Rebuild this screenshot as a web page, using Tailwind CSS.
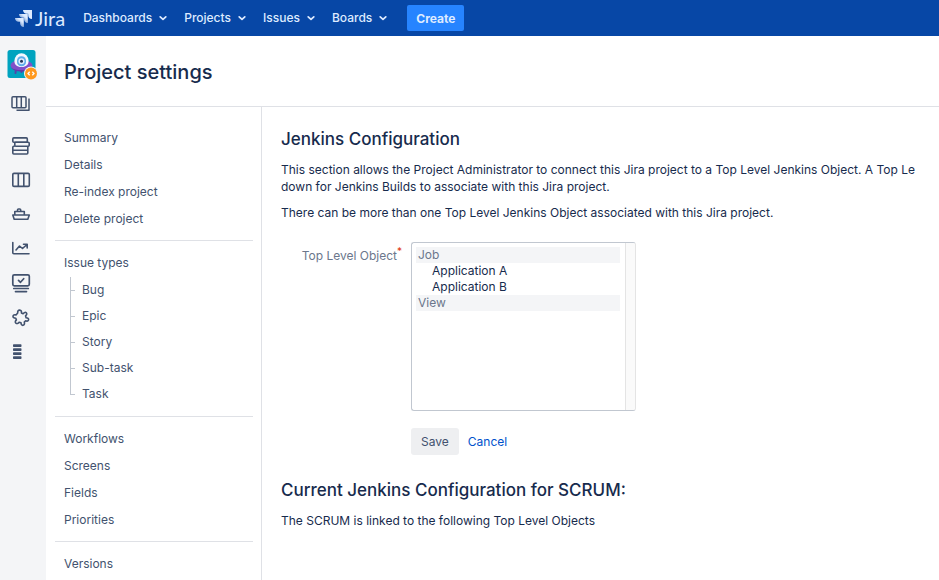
<!DOCTYPE html>
<html lang="en">
<head>
<meta charset="utf-8">
<meta name="viewport" content="width=device-width, initial-scale=1">
<title>Project settings - Jira</title>
<script src="https://cdn.jsdelivr.net/npm/@tailwindcss/browser@4"></script>
</head>
<body class="flex h-screen flex-col overflow-hidden bg-white font-['Inter','Liberation_Sans',sans-serif] text-[12px] leading-[17px] text-[#172b4d]">
  <header class="flex h-9 shrink-0 items-center bg-[#0747a6] pl-[15px] text-[#deebff]">
    <a href="#" aria-label="Jira" class="flex items-center gap-[2px]">
      <svg class="h-[18px] w-[18px]" viewBox="0 0 18 18" aria-hidden="true">
        <defs>
          <linearGradient id="fade" x1="1" y1="0" x2="0.2" y2="0.9"><stop offset="0.35" stop-color="#deebff"/><stop offset="1" stop-color="#deebff" stop-opacity="0.3"/></linearGradient>
        </defs>
        <path fill="#deebff" d="M8 1h9v9c-2.200 0-3.800-1.700-3.800-3.800V4.800h-1.400C9.700 4.800 8 3.200 8 1z"/>
        <path fill="url(#fade)" d="M4 5h8.800v9c-2.200 0-3.700-1.700-3.700-3.800V8.800H7.700C5.600 8.800 4 7.200 4 5z"/>
        <path fill="url(#fade)" d="M0 9h8.800v9c-2.200 0-3.700-1.700-3.700-3.800v-1.400H3.700C1.600 12.800 0 11.200 0 9z"/>
      </svg>
      <span class="font-['Lato','Inter',sans-serif] text-[20px] leading-6">Jira</span>
    </a>
    <nav class="ml-[18px] flex items-center gap-[17px] pb-px font-medium">
      <button type="button" class="flex items-center gap-[7px]">Dashboards<svg class="h-2 w-2" viewBox="0 0 8 8" fill="none" stroke="currentColor" stroke-width="1.700" stroke-linecap="round" stroke-linejoin="round"><path d="M1.200 2.800 4 5.400l2.800-2.600"/></svg></button>
      <button type="button" class="flex items-center gap-[7px]">Projects<svg class="h-2 w-2" viewBox="0 0 8 8" fill="none" stroke="currentColor" stroke-width="1.700" stroke-linecap="round" stroke-linejoin="round"><path d="M1.200 2.800 4 5.400l2.800-2.600"/></svg></button>
      <button type="button" class="flex items-center gap-[7px]">Issues<svg class="h-2 w-2" viewBox="0 0 8 8" fill="none" stroke="currentColor" stroke-width="1.700" stroke-linecap="round" stroke-linejoin="round"><path d="M1.200 2.800 4 5.400l2.800-2.600"/></svg></button>
      <button type="button" class="flex items-center gap-[7px]">Boards<svg class="h-2 w-2" viewBox="0 0 8 8" fill="none" stroke="currentColor" stroke-width="1.700" stroke-linecap="round" stroke-linejoin="round"><path d="M1.200 2.800 4 5.400l2.800-2.600"/></svg></button>
    </nav>
    <button type="button" class="ml-5 h-[26px] rounded-[2px] bg-[#2684ff] px-[9px] text-[12px] font-bold">Create</button>
  </header>

  <div class="flex min-h-0 flex-1">
    <nav aria-label="Project" class="flex w-[46px] shrink-0 flex-col bg-[#f4f5f7] pt-[14px] text-[#42526e]">
      <a href="#" aria-label="Project" class="ml-[7px] block">
        <svg class="h-8 w-8" viewBox="0 0 32 32">
          <rect x="0.500" width="28" height="28" rx="2.500" fill="#00a3bf"/>
          <path d="M9 18.500 8.500 23M20 18.500l.5 4M14.500 20v2" stroke="#5243aa" stroke-width="2" stroke-linecap="round"/>
          <ellipse cx="14.500" cy="15.500" rx="11" ry="5.600" fill="#8050c8"/>
          <path d="M4 17.500c3 5 17 6 21 0-2 2-6 2.500-10.500 2.500S6 19.500 4 17.500z" fill="#5e3aa8"/>
          <path d="M7.400 11a7.100 7.800 0 0 1 14.200 0c0 3.500-2.300 6-7.100 6s-7.100-2.500-7.100-6z" fill="#f4f8ff"/>
          <rect x="10" y="6.300" width="9" height="10" rx="4.300" fill="#5faeea"/>
          <circle cx="14.500" cy="11.200" r="3" fill="#deebff"/>
          <circle cx="14.500" cy="11.200" r="1.500" fill="#253858"/>
          <circle cx="24" cy="23.500" r="7" fill="#f4f5f7"/>
          <circle cx="24" cy="23.500" r="6" fill="#ff991f"/>
          <path d="m22.700 21.700-1.700 1.800 1.700 1.800M25.300 21.700l1.700 1.800-1.700 1.800" fill="none" stroke="#fff" stroke-width="1.300"/>
        </svg>
      </a>
      <div class="ml-[11px] mt-[13px] flex flex-col items-start gap-4">
        <a href="#" aria-label="Boards" class="mb-2"><svg class="h-[18px] w-5" viewBox="0 0 20 18" fill="none" stroke="currentColor" stroke-width="1.500" stroke-linejoin="round"><rect x="1" y="1.700" width="14" height="11" rx="1"/><path d="M5.700 1.700v11M10.300 1.700v11M18 3.500v11.700H5.500"/></svg></a>
        <a href="#" aria-label="Backlog"><svg class="h-[18px] w-5" viewBox="0 0 20 18" fill="none" stroke="currentColor" stroke-width="1.600" stroke-linejoin="round"><rect x="1.800" y="0.900" width="14.500" height="4.300" rx="1"/><rect x="3.800" y="5.200" width="14.400" height="4.100" rx="1"/><path d="M3.800 9.300H2.800q-1 0-1 1v5.700q0 1 1 1h13q1 0 1-1V9.300M1.800 13.200h15"/></svg></a>
        <a href="#" aria-label="Active sprints"><svg class="h-[18px] w-5" viewBox="0 0 20 18" fill="none" stroke="currentColor" stroke-width="1.600"><rect x="1.800" y="2.400" width="16.500" height="13" rx="1.200"/><path d="M7.300 2.400v13M12.800 2.400v13"/></svg></a>
        <a href="#" aria-label="Releases"><svg class="h-[18px] w-5" viewBox="0 0 20 18" fill="none" stroke="currentColor" stroke-width="1.600" stroke-linejoin="round"><path d="M1.800 10h16.500l-1.500 4.200H3.200zM3.800 10V6.500h9.500V10M6.500 6.500V5q0-1 1-1h1.200q1 0 1 1v1.500"/></svg></a>
        <a href="#" aria-label="Reports"><svg class="h-[18px] w-5" viewBox="0 0 20 18" fill="none" stroke="currentColor" stroke-width="1.600" stroke-linecap="round" stroke-linejoin="round"><path d="M1.800 3.500v10.200q0 1 1 1H18M5 11l3.500-4 3 2.500L16 5.500M12.500 5.300h3.700V9"/></svg></a>
        <a href="#" aria-label="Issues"><svg class="h-5 w-5" viewBox="0 0 20 20" fill="none" stroke="currentColor" stroke-width="1.700" stroke-linecap="round" stroke-linejoin="round"><rect x="1.800" y="1.800" width="16.500" height="11" rx="1.500"/><path d="m7.500 7.300 2 2 3.200-3.600M2.800 15.500h14.500M4.500 18.600h11"/></svg></a>
        <a href="#" aria-label="Add-ons"><svg class="h-[18px] w-5" viewBox="0 0 20 18" fill="none" stroke="currentColor" stroke-width="1.600" stroke-linejoin="round"><path d="M6.700 3.900C6.500 2 7.300 1 8.700 1.100c1.500.100 2 1.300 1.700 2.900l1.700.7C13.400 3.300 14.500 3 15.300 3.800c.9.900.5 2-.8 3l.6 1.900c1.800.100 2.700.8 2.500 2-.2 1.300-1.400 1.700-3 1.100l-1.300 1.300c.5 1.900 0 2.900-1.200 3.200-1.300.2-2-.7-2.100-2.500l-1.900-.6c-1 1.400-2.200 1.700-3.200.9-1-.9-.7-2 .5-3.200L4.800 9.200C2.900 9.200 1.900 8.500 2 7.200c.200-1.300 1.300-1.700 3-1.300z"/></svg></a>
        <a href="#" aria-label="More"><svg class="h-[18px] w-5" viewBox="0 0 20 18" fill="currentColor"><rect x="2" y="1.200" width="8.500" height="2.800" rx=".7"/><rect x="2" y="5.200" width="8.500" height="2.800" rx=".7"/><rect x="2" y="9.200" width="8.500" height="2.800" rx=".7"/><rect x="2" y="13.200" width="8.500" height="2.800" rx=".7"/></svg></a>
      </div>
    </nav>

    <div class="flex min-w-0 flex-1 flex-col">
      <div class="border-b border-[#dfe1e6] px-[18px] pb-5 pt-[22px]">
        <h1 class="text-[20px] font-medium leading-7">Project settings</h1>
      </div>
      <div class="flex min-h-0 flex-1">
        <nav aria-label="Settings" class="w-[216px] shrink-0 border-r border-[#dfe1e6] pl-[9px] pr-2 pt-[21px] leading-5 text-[#42526e]">
          <ul class="flex flex-col gap-[7px] border-b border-[#dfe1e6] px-[9px] pb-[11px]">
            <li><a href="#">Summary</a></li>
            <li><a href="#">Details</a></li>
            <li><a href="#">Re-index project</a></li>
            <li><a href="#">Delete project</a></li>
          </ul>
          <div class="border-b border-[#dfe1e6] px-[9px] pb-[9px] pt-3">
            <a href="#">Issue types</a>
            <ul class="ml-[6px] flex flex-col pt-1">
              <li class="flex h-[26px] border-l border-[#c1c7d0]"><span class="mr-[7px] mt-[13px] w-1 border-t border-[#c1c7d0]"></span><a href="#" class="leading-[26px]">Bug</a></li>
              <li class="flex h-[26px] border-l border-[#c1c7d0]"><span class="mr-[7px] mt-[13px] w-1 border-t border-[#c1c7d0]"></span><a href="#" class="leading-[26px]">Epic</a></li>
              <li class="flex h-[26px] border-l border-[#c1c7d0]"><span class="mr-[7px] mt-[13px] w-1 border-t border-[#c1c7d0]"></span><a href="#" class="leading-[26px]">Story</a></li>
              <li class="flex h-[26px] border-l border-[#c1c7d0]"><span class="mr-[7px] mt-[13px] w-1 border-t border-[#c1c7d0]"></span><a href="#" class="leading-[26px]">Sub-task</a></li>
              <li class="flex h-[26px]"><span class="mr-[7px] h-[14px] w-[5px] border-b border-l border-[#c1c7d0]"></span><a href="#" class="leading-[26px]">Task</a></li>
            </ul>
          </div>
          <ul class="flex flex-col gap-[7px] border-b border-[#dfe1e6] px-[9px] pb-[11px] pt-3">
            <li><a href="#">Workflows</a></li>
            <li><a href="#">Screens</a></li>
            <li><a href="#">Fields</a></li>
            <li><a href="#">Priorities</a></li>
          </ul>
          <ul class="px-[9px] pt-3">
            <li><a href="#">Versions</a></li>
          </ul>
        </nav>

        <main class="min-w-0 flex-1 overflow-hidden pl-[19px] pt-5">
          <h2 class="text-[17px] font-medium leading-6">Jenkins Configuration</h2>
          <p class="mt-[10px]">This section allows the Project Administrator to connect this Jira project to a Top Level Jenkins Object. A Top Le<br>down for Jenkins Builds to associate with this Jira project.</p>
          <p class="mt-[9px]">There can be more than one Top Level Jenkins Object associated with this Jira project.</p>
          <form class="mt-[21px]">
            <div class="flex items-start">
              <label for="objects" class="mt-[5px] flex w-[130px] justify-end pr-[9px] text-[#6b778c]">Top Level Object<span class="-mt-1 text-[10px] text-[#de350b]">*</span></label>
              <div class="flex h-[169px] w-[225px] overflow-hidden rounded-[3px] border border-[#c1c7d0] border-r-[#e4e4e4]">
                <select id="objects" multiple class="h-full min-w-0 flex-1 appearance-none overflow-hidden py-1 pl-1 pr-[5px] outline-none">
                  <optgroup label="Job" class="bg-[#f4f5f7] font-normal leading-4 text-[#6b778c]">
                    <option class="h-4 min-h-0 bg-white py-0 pl-4 leading-4 text-[#172b4d]">Application A</option>
                    <option class="h-4 min-h-0 bg-white py-0 pl-4 leading-4 text-[#172b4d]">Application B</option>
                  </optgroup>
                  <optgroup label="View" class="bg-[#f4f5f7] font-normal leading-4 text-[#6b778c]"></optgroup>
                </select>
                <span class="w-[10px] shrink-0 border-l border-[#e4e4e4] bg-[#fafafa]"></span>
              </div>
            </div>
            <div class="ml-[130px] mt-[17px] flex items-center gap-[9px]">
              <button type="submit" class="h-[27px] rounded-[3px] bg-[#eeeff1] px-[10px] text-[#42526e]">Save</button>
              <a href="#" class="text-[#0052cc]">Cancel</a>
            </div>
          </form>
          <h2 class="mt-[23px] text-[17px] font-medium leading-6">Current Jenkins Configuration for SCRUM:</h2>
          <p class="mt-[10px]">The SCRUM is linked to the following Top Level Objects</p>
        </main>
      </div>
    </div>
  </div>
</body>
</html>
